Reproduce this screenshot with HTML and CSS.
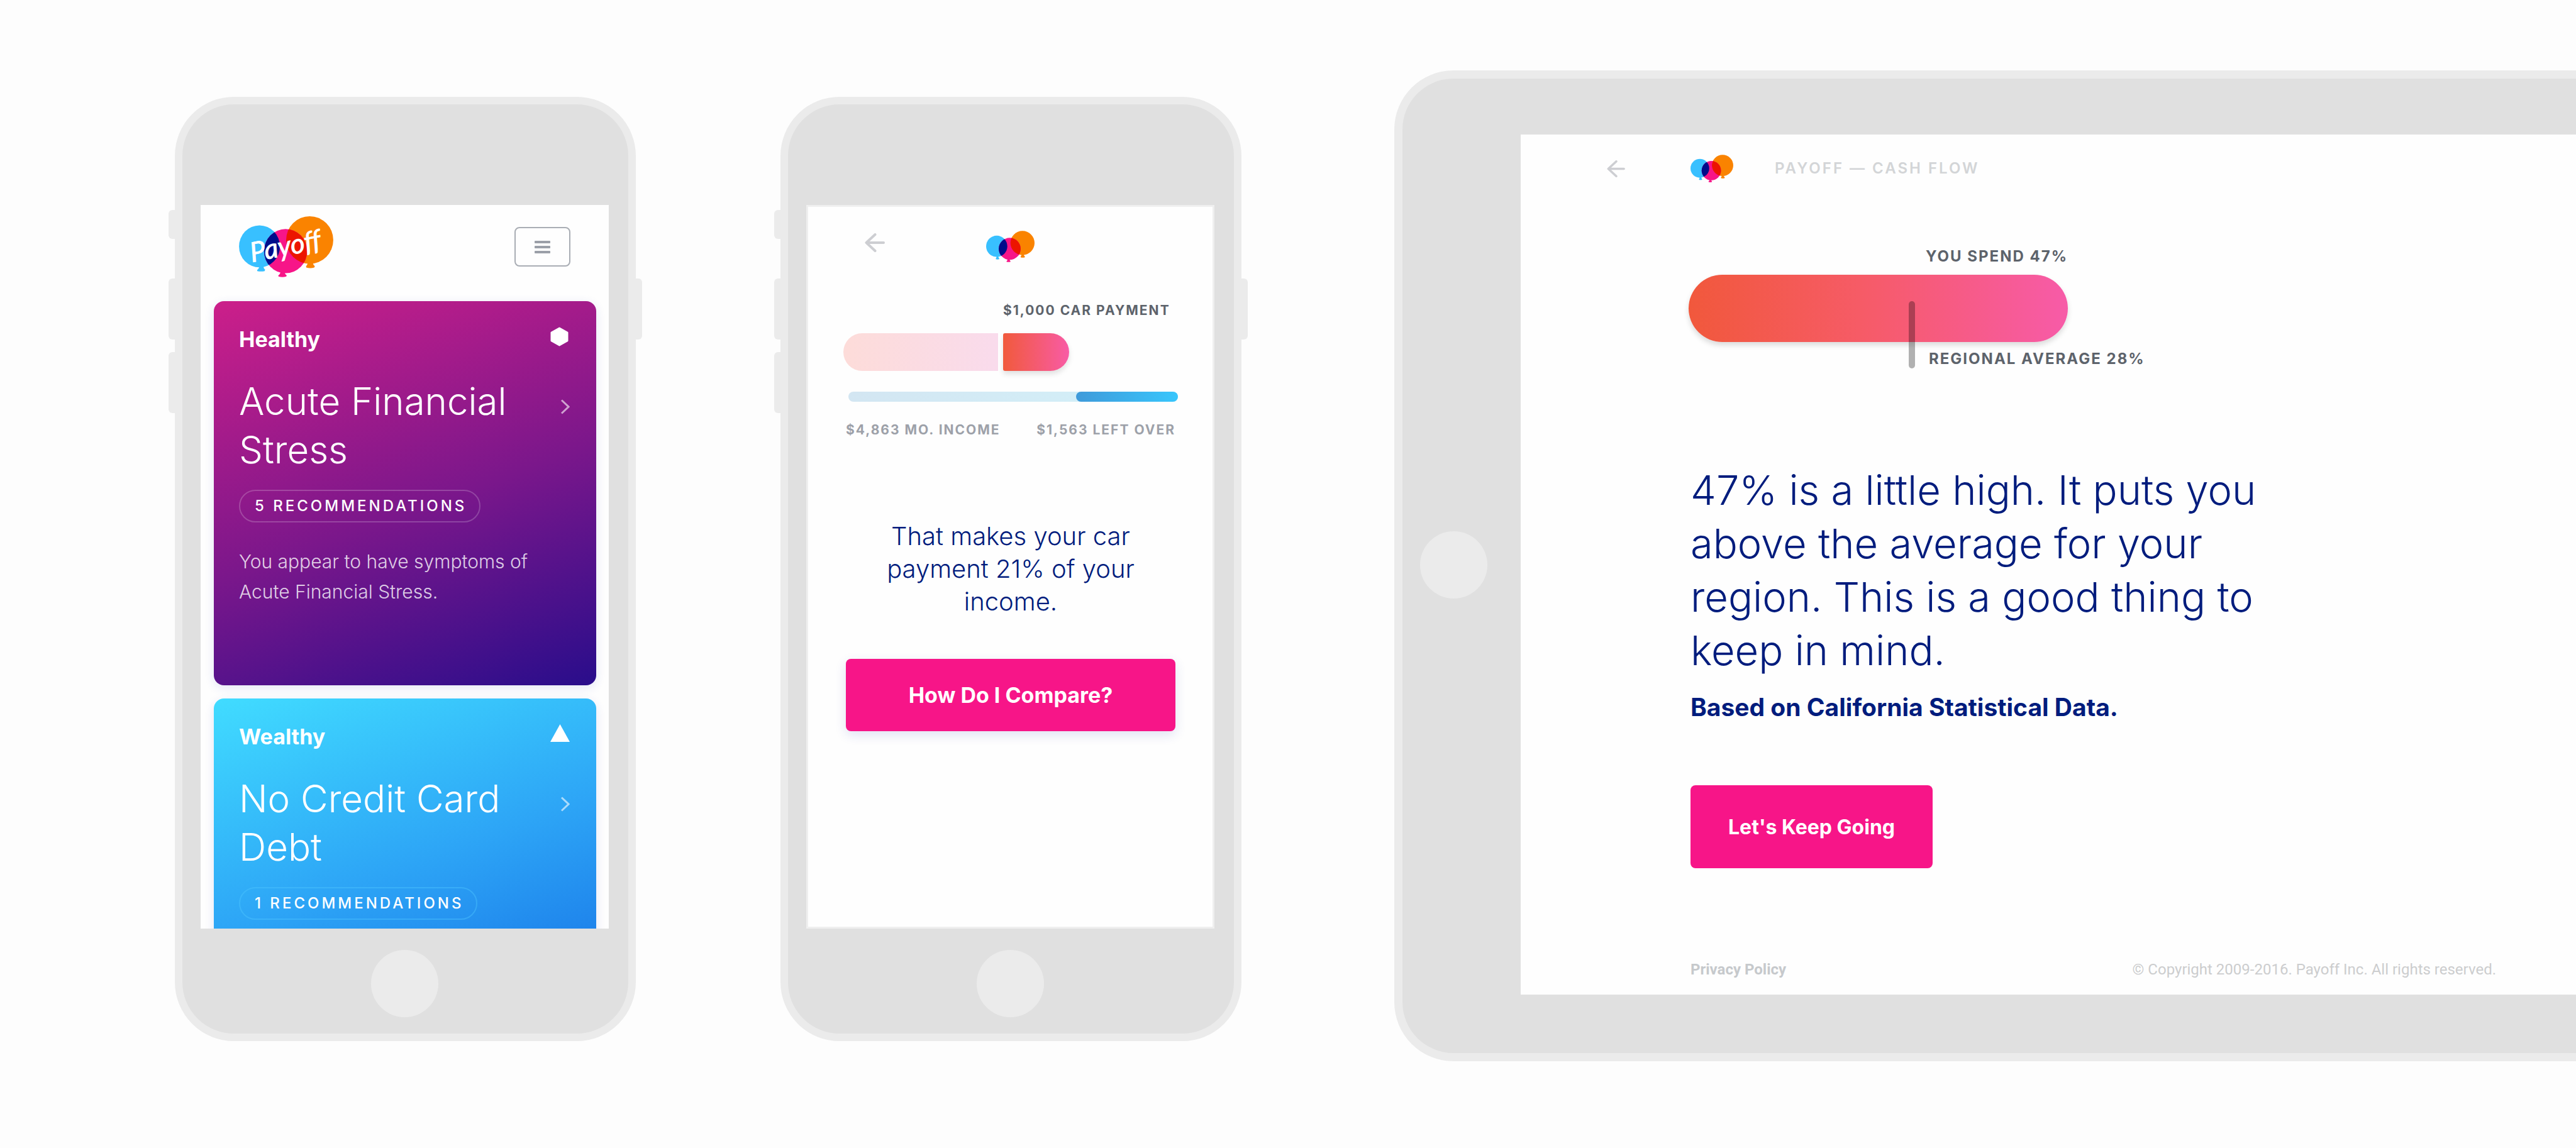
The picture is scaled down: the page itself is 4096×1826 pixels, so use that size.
FILE: index.html
```html
<!DOCTYPE html>
<html lang="en">
<head>
<meta charset="utf-8">
<title>Payoff</title>
<link rel="stylesheet" href="styles.css">
</head>
<body>
<svg class="defs" aria-hidden="true">
  <defs>
    <clipPath id="clip-pink"><circle cx="174" cy="152" r="60"/></clipPath>
    <symbol id="mark" viewBox="45 54 265 170">
      <path fill="#38c0ff" d="M102 194h10q0 7 5 11v4q-10 3-19 0v-4q4-4 4-11z"/>
      <path fill="#f71588" d="M162 210h12q0 6 4 9v4q-11 3-21 0v-4q5-3 5-9z"/>
      <path fill="#fa8300" d="M239 184h12q1 7 6 10v4q-12 4-23 0v-4q4-3 5-10z"/>
      <circle cx="103" cy="138" r="58" fill="#38c0ff"/>
      <circle cx="244" cy="120" r="66" fill="#fa8300"/>
      <circle cx="174" cy="152" r="60" fill="#f71588"/>
      <g clip-path="url(#clip-pink)">
        <circle cx="103" cy="138" r="58" fill="#000c8a"/>
        <circle cx="244" cy="120" r="66" fill="#ec1500"/>
      </g>
    </symbol>
    <symbol id="arrow" viewBox="0 0 32 30">
      <path d="M16.500 2 2.500 15l14 13M3 15h27" fill="none" stroke="currentColor" stroke-width="4" stroke-linecap="round" stroke-linejoin="round"/>
    </symbol>
    <symbol id="chevron" viewBox="0 0 15 24">
      <path d="m2 1.500 11 10.500-11 10.500" fill="none" stroke="currentColor" stroke-width="3"/>
    </symbol>
  </defs>
</svg>

<main class="stage">
  <section class="device phone">
    <span class="key mute"></span><span class="key volume-up"></span><span class="key volume-down"></span><span class="key power"></span>
    <div class="screen phone-screen">
      <header class="home-header">
        <svg class="logo" viewBox="76 68 516 334" role="img" aria-label="Payoff">
          <clipPath id="clip-logo"><ellipse cx="331" cy="259" rx="118" ry="121"/></clipPath>
          <path fill="#38c0ff" d="M187 342h22q2 14 10 19l-3 7q-20 5-40 0l-1-6q11-7 12-20z"/>
          <path fill="#f71588" d="M303 372h22q2 14 12 19l-2 7q-22 6-43 0l-1-6q11-7 12-20z"/>
          <path fill="#fa8300" d="M452 322h28q2 14 11 20l-3 7q-22 6-44 0l-1-7q8-6 9-20z"/>
          <ellipse cx="188" cy="233" rx="112" ry="115" fill="#38c0ff"/>
          <ellipse cx="463" cy="198" rx="129" ry="130" fill="#fa8300"/>
          <ellipse cx="331" cy="259" rx="118" ry="121" fill="#f71588"/>
          <g clip-path="url(#clip-logo)">
            <ellipse cx="188" cy="233" rx="112" ry="115" fill="#000c8a"/>
            <ellipse cx="463" cy="198" rx="129" ry="130" fill="#ec1500"/>
          </g>
          <text class="logo-text" x="146" y="320" transform="rotate(-11 146 320)">Payoff</text>
        </svg>
        <button class="menu-button" type="button" aria-label="Menu"><span></span><span></span><span></span></button>
      </header>
      <article class="card healthy">
        <div class="card-top">
          <h2 class="card-label">Healthy</h2>
          <svg class="shape" width="31" height="31" viewBox="0 0 31 31" aria-hidden="true"><path d="M14.500 2 27 9v13l-12.500 7L2 22V9z" fill="#fff" stroke="#fff" stroke-width="3" stroke-linejoin="round"/></svg>
        </div>
        <div class="card-main">
          <h3 class="card-title">Acute Financial Stress</h3>
          <svg class="chevron"><use href="#chevron"/></svg>
        </div>
        <a class="pill" href="#recommendations">5 RECOMMENDATIONS</a>
        <p class="card-text">You appear to have symptoms of Acute Financial Stress.</p>
      </article>
      <article class="card wealthy">
        <div class="card-top">
          <h2 class="card-label">Wealthy</h2>
          <svg class="shape" width="31" height="28" viewBox="0 0 31 28" aria-hidden="true"><path d="M15.500 0 31 28H0z" fill="#fff"/></svg>
        </div>
        <div class="card-main">
          <h3 class="card-title">No Credit Card Debt</h3>
          <svg class="chevron"><use href="#chevron"/></svg>
        </div>
        <a class="pill" href="#recommendations">1 RECOMMENDATIONS</a>
      </article>
    </div>
    <div class="home"></div>
  </section>

  <section class="device phone">
    <span class="key mute"></span><span class="key volume-up"></span><span class="key volume-down"></span><span class="key power"></span>
    <div class="screen phone-screen framed">
      <header class="flow-header">
        <a class="back" href="#back" aria-label="Back"><svg class="arrow"><use href="#arrow"/></svg></a>
        <svg class="mark" role="img" aria-label="Payoff"><use href="#mark"/></svg>
      </header>
      <div class="flow">
        <div class="spend">
          <span class="caption dark">$1,000 CAR PAYMENT</span>
          <div class="spend-rest"></div>
          <div class="spend-car"></div>
        </div>
        <div class="income"><div class="left-over"></div></div>
        <div class="legend"><span class="caption">$4,863 MO. INCOME</span><span class="caption">$1,563 LEFT OVER</span></div>
        <p class="message">That makes your car payment 21% of your income.</p>
        <button class="cta wide" type="button">How Do I Compare?</button>
      </div>
    </div>
    <div class="home"></div>
  </section>

  <section class="device tablet">
    <div class="home"></div>
    <div class="screen tablet-screen">
      <header class="tablet-header">
        <a class="back" href="#back" aria-label="Back"><svg class="arrow"><use href="#arrow"/></svg></a>
        <svg class="mark" role="img" aria-label="Payoff"><use href="#mark"/></svg>
        <span class="label faint">PAYOFF — CASH FLOW</span>
      </header>
      <div class="report">
        <div class="compare">
          <span class="label you">YOU SPEND 47%</span>
          <div class="compare-bar"><div class="marker"></div></div>
          <span class="label average">REGIONAL AVERAGE 28%</span>
        </div>
        <p class="verdict">47% is a little high. It puts you above the average for your region. This is a good thing to keep in mind.</p>
        <p class="source">Based on California Statistical Data.</p>
        <button class="cta" type="button">Let's Keep Going</button>
      </div>
      <footer class="footer"><a class="privacy" href="#privacy">Privacy Policy</a><span>© Copyright 2009-2016. Payoff Inc. All rights reserved.</span></footer>
    </div>
  </section>
</main>
</body>
</html>
```
FILE: styles.css
```css
* { box-sizing: border-box; }

body {
  margin: 0;
  background: #fdfdfd;
  font-family: Inter, "Liberation Sans", sans-serif;
  overflow-x: hidden;
}

h2, h3, p { margin: 0; font-weight: inherit; }
button { font-family: inherit; border: 0; cursor: pointer; }
a { color: inherit; text-decoration: none; }
svg { display: block; flex: none; }
.defs { position: absolute; width: 0; height: 0; }

.stage {
  display: flex;
  align-items: center;
  padding: 112px 0 130px 278px;
}

/* Devices */
.device {
  position: relative;
  display: flex;
  background: #e0e0e0;
  border: 12px solid #ebebeb;
  border-radius: 94px;
}
.phone {
  flex: none;
  flex-direction: column;
  align-items: center;
  width: 733px;
  margin: 10px 230px 0 0;
  padding: 160px 31px 26px 29px;
}
.tablet {
  flex: 1;
  align-items: center;
  min-width: 0;
  margin-left: 13px;
  padding: 89px 0 93px 28px;
  border-width: 13px 0 13px 13px;
  border-radius: 94px 0 0 94px;
}
.home {
  flex: none;
  width: 107px;
  height: 107px;
  border-radius: 50%;
  background: #ebebeb;
}
.phone .home { margin-top: 34px; }
.tablet .home { margin-right: 53px; }
.key {
  position: absolute;
  left: -22px;
  width: 10px;
  background: #ebebeb;
  border-radius: 6px 0 0 6px;
}
.mute { top: 168px; height: 46px; }
.volume-up { top: 277px; height: 97px; }
.volume-down { top: 394px; height: 97px; }
.power { top: 277px; left: auto; right: -22px; height: 97px; border-radius: 0 6px 6px 0; }

.screen { background: #fefefe; overflow: hidden; }
.phone-screen { width: 100%; aspect-ratio: 649 / 1151; }
.framed { border: 3px solid #efefef; }

/* Phone: overview */
.home-header {
  display: flex;
  justify-content: space-between;
  align-items: flex-start;
  padding: 18px 61px 38px;
}
.logo { width: 150px; height: 97px; }
.logo-text {
  font: italic 400 150px Lato, sans-serif;
  fill: #fff;
  stroke: #fff;
  stroke-width: 3px;
}
.menu-button {
  display: flex;
  flex-direction: column;
  align-items: center;
  justify-content: center;
  gap: 4px;
  width: 89px;
  height: 63px;
  margin-top: 17px;
  padding: 0;
  background: none;
  border: 2px solid #a9adb4;
  border-radius: 8px;
}
.menu-button span {
  width: 25px;
  height: 4px;
  border-radius: 1px;
  background: #9b9fa8;
}
.card {
  height: 611px;
  margin: 0 20px 21px 21px;
  padding: 41px 42px 41px 40px;
  border-radius: 16px;
  color: #fff;
  box-shadow: 0 4px 16px rgba(40, 60, 180, .12);
}
.healthy { background: linear-gradient(160deg, #cc1f8a 0%, #7a178b 54%, #290d8b 100%); }
.wealthy { background: linear-gradient(160deg, #41dcff 0%, #2da5f6 45%, #0e5fe0 100%); }
.card-top, .card-main { display: flex; justify-content: space-between; align-items: flex-start; }
.card-label { font-size: 34px; font-weight: 700; line-height: 40px; }
.card-main { margin-top: 40px; }
.card-title { max-width: 480px; font-size: 60px; font-weight: 300; line-height: 77px; }
.chevron { width: 15px; height: 24px; margin-top: 35px; opacity: .6; }
.pill {
  display: inline-block;
  margin-top: 25px;
  padding: 0 20px 0 23px;
  border: 2px solid rgba(255, 255, 255, .2);
  border-radius: 26px;
  font-size: 24px;
  font-weight: 500;
  line-height: 48px;
  letter-spacing: 4px;
}
.wealthy .pill { border-color: rgba(80, 200, 255, .4); }
.card-text {
  margin-top: 38px;
  font-size: 30px;
  font-weight: 300;
  line-height: 48px;
  color: rgba(255, 255, 255, .8);
}

/* Phone: payment flow */
.flow-header {
  display: grid;
  grid-template-columns: 1fr auto 1fr;
  align-items: start;
  padding: 38px 90px 0;
}
.back { color: #cdced2; }
.flow-header .arrow { width: 32px; height: 30px; margin-top: 4px; }
.flow-header .mark { width: 77px; height: 50px; }
.flow { padding: 65px 59px 0 60px; }
.spend {
  display: grid;
  grid-template-columns: 246px 105px;
  gap: 24px 8px;
  margin-left: -4px;
}
.caption {
  font-size: 21px;
  font-weight: 700;
  line-height: 24px;
  letter-spacing: 2px;
  white-space: nowrap;
  color: #9da1a9;
}
.dark { grid-column: 2; color: #5d636b; }
.spend-rest {
  height: 60px;
  border-radius: 30px 0 0 30px;
  background: linear-gradient(90deg, #fddcd9, #f9dbec);
}
.spend-car {
  border-radius: 3px 30px 30px 3px;
  background: linear-gradient(90deg, #f15a3c, #f85ba5);
  box-shadow: 0 5px 8px rgba(0, 0, 0, .12);
}
.income {
  display: flex;
  justify-content: flex-end;
  height: 16px;
  margin: 33px -4px 33px 4px;
  border-radius: 8px;
  background: linear-gradient(90deg, #d3e6f2, #d3f1f9);
}
.left-over {
  width: 31%;
  border-radius: 8px;
  background: linear-gradient(90deg, #3f9ada, #38c6fc);
}
.legend { display: flex; justify-content: space-between; }
.message {
  max-width: 420px;
  margin: 131px auto 65px;
  font-size: 40px;
  font-weight: 300;
  line-height: 52px;
  text-align: center;
  color: #001c7d;
}
.cta {
  height: 132px;
  padding: 0 60px;
  border-radius: 8px;
  background: #f71588;
  color: #fff;
  font-size: 32px;
  font-weight: 700;
}
.wide {
  width: 100%;
  height: 115px;
  font-size: 34px;
  box-shadow: 0 6px 18px rgba(40, 60, 180, .14);
}

/* Tablet: comparison */
.tablet-screen {
  flex: 1;
  display: flex;
  flex-direction: column;
  min-width: 0;
  min-height: 1368px;
}
.tablet-header { display: flex; align-items: center; padding: 32px 0 0 137px; }
.tablet-header .arrow { width: 29px; height: 27px; }
.tablet-header .mark { width: 68px; height: 44px; margin: 0 66px 0 104px; }
.label {
  font-size: 24px;
  font-weight: 700;
  line-height: 28px;
  letter-spacing: 2px;
  white-space: nowrap;
  color: #5d636b;
}
.faint { font-weight: 600; letter-spacing: 3px; color: #d3d5d7; }
.report { padding: 104px 0 0 270px; }
.compare {
  display: flex;
  flex-direction: column;
  width: 603px;
  margin-left: -3px;
}
.you { align-self: flex-end; }
.compare-bar {
  position: relative;
  height: 107px;
  margin: 15px 0 13px;
  border-radius: 54px;
  background: linear-gradient(90deg, #f1583c, #f65b66 45%, #f75ba8);
  box-shadow: 0 5px 8px rgba(0, 0, 0, .14);
}
.marker {
  position: absolute;
  left: 58%;
  top: 42px;
  width: 10px;
  height: 107px;
  border-radius: 5px;
  background: rgba(0, 0, 0, .3);
}
.average { margin-left: 382px; }
.verdict {
  max-width: 940px;
  margin-top: 152px;
  font-size: 65px;
  font-weight: 300;
  line-height: 85px;
  color: #001c7d;
}
.source {
  margin: 24px 0 100px;
  font-size: 39px;
  font-weight: 700;
  line-height: 48px;
  color: #001c7d;
}
.footer {
  display: flex;
  justify-content: space-between;
  margin-top: auto;
  padding: 0 127px 26px 270px;
  font-family: Roboto, sans-serif;
  font-size: 24px;
  line-height: 28px;
  color: #cccdce;
}
.privacy { font-weight: 700; color: #c6c9cc; }
```
